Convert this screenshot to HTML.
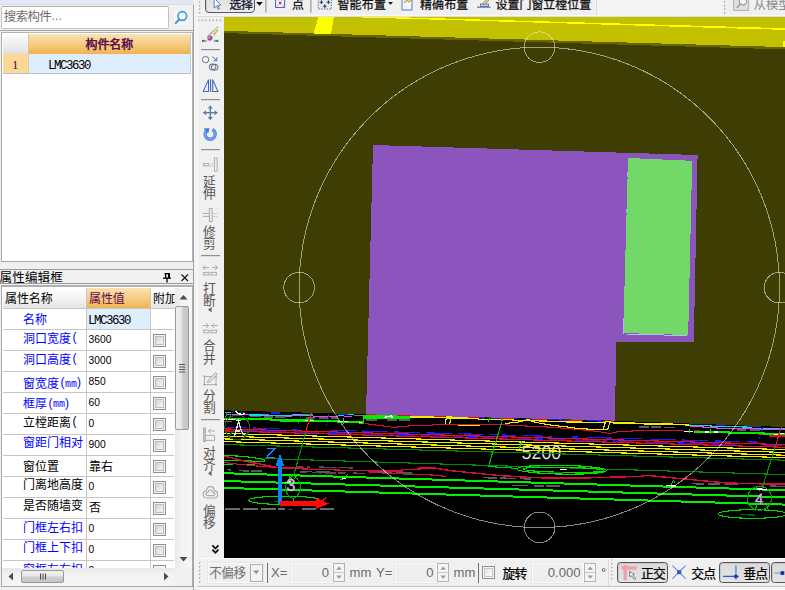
<!DOCTYPE html>
<html lang="zh"><head><meta charset="utf-8"><title>CAD - LMC3630</title><style>
html,body{margin:0;padding:0;background:#f0f0f0;}
body{width:785px;height:590px;overflow:hidden;position:relative;font-family:"Liberation Sans",sans-serif;}
#app{position:absolute;left:0;top:0;width:785px;height:590px;overflow:hidden;background:#f0f0f0;}
#app>div{position:absolute;box-sizing:content-box;}
#app>div.b{box-sizing:border-box;}
.t{white-space:nowrap;line-height:1;}
.mono{font:12.4px "Liberation Mono",monospace;letter-spacing:-1.45px;color:#000;}
.h{color:transparent;font-family:"Liberation Sans",sans-serif;line-height:1;white-space:nowrap;overflow:hidden;}
.num{font:10.3px "Liberation Sans",sans-serif;color:#000;}
#ov{position:absolute;left:0;top:0;pointer-events:none;}
#ov text.c{font-family:"Liberation Sans","Noto Sans CJK SC",sans-serif;}
</style></head>
<body>
<div id="app">
<div style="left:0px;top:0px;width:194px;height:590px;background:#f0f0f0;"></div>
<div style="left:0px;top:0px;width:194px;height:4px;background:#e2e6f6;"></div>
<div style="left:0px;top:4px;width:194px;height:1px;background:#d9dbe2;"></div>
<div style="left:0px;top:5px;width:194px;height:1px;background:#f4f4f4;"></div>
<div style="left:193px;top:5px;width:1px;height:585px;background:#a3a3a3;"></div>
<div style="left:194px;top:0px;width:3px;height:590px;background:#f3f3f3;"></div>
<div class="b" style="left:1px;top:6px;width:168px;height:23px;background:#fff;border:1px solid #c3c3c3;border-top-color:#ababab;border-radius:2px;"></div>
<div style="left:0px;top:30px;width:194px;height:1px;background:#a6a6a6;"></div>
<div class="b" style="left:1px;top:32px;width:192px;height:230px;background:#fff;border:1px solid #b4b4b4;border-left:1.5px solid #a9a9a9;border-bottom-color:#a9a9a9;"></div>
<div style="left:3px;top:34px;width:25px;height:20px;background:linear-gradient(#fdfdfd,#ececec 60%,#e0e0e0);"></div>
<div style="left:28px;top:34px;width:1px;height:20px;background:#d7c9a8;"></div>
<div style="left:29px;top:34px;width:161px;height:20px;background:linear-gradient(#fae3b3,#f6cf88 45%,#f0b450);"></div>
<div style="left:3px;top:54px;width:25px;height:19px;background:#fdd794;"></div>
<div style="left:28px;top:54px;width:1px;height:19px;background:#d9c9a0;"></div>
<div style="left:29px;top:54px;width:161px;height:19px;background:#dfeefd;"></div>
<div style="left:3px;top:73px;width:187px;height:1px;background:#b9c2cc;"></div>
<div style="left:190px;top:34px;width:1px;height:40px;background:#c8c8c8;"></div>
<div class="t" style="left:12px;top:57px;font:13px 'Liberation Serif',serif;color:#5c0a4e;">1</div>
<div class="t mono" style="left:48px;top:58.5px;">LMC3630</div>
<div class="b" style="left:0px;top:269px;width:194px;height:15px;background:#f1f1f1;border:1px solid #9b9b9b;border-left:none;border-radius:0 2px 2px 0;"></div>
<div class="b" style="left:1px;top:285px;width:192px;height:302px;background:#fff;border:1px solid #a9a9a9;border-top:2px solid #b0b0b0;"></div>
<div style="left:3px;top:288px;width:83px;height:20px;background:linear-gradient(#ffffff,#f3f3f3 55%,#e4e4e4);"></div>
<div style="left:86px;top:288px;width:1px;height:20px;background:#c9c9c9;"></div>
<div style="left:87px;top:288px;width:63px;height:20px;background:linear-gradient(#fae3b3,#f6cf88 45%,#f0b450);"></div>
<div style="left:150px;top:288px;width:1px;height:20px;background:#d8c8a8;"></div>
<div style="left:151px;top:288px;width:24px;height:20px;background:linear-gradient(#ffffff,#f3f3f3 55%,#e4e4e4);"></div>
<div style="left:3px;top:308px;width:171px;height:1px;background:#c6c6c6;"></div>
<div style="left:86px;top:309px;width:1px;height:20px;background:#c6c6c6;"></div>
<div style="left:150px;top:309px;width:1px;height:20px;background:#c6c6c6;"></div>
<div style="left:87px;top:309px;width:63px;height:20px;background:#dfeefd;"></div>
<div class="t mono" style="left:88px;top:313.5px;">LMC3630</div>
<div style="left:3px;top:329px;width:171px;height:1px;background:#c6c6c6;"></div>
<div style="left:86px;top:330px;width:1px;height:20px;background:#c6c6c6;"></div>
<div style="left:150px;top:330px;width:1px;height:20px;background:#c6c6c6;"></div>
<div class="t num" style="left:88.5px;top:334.2px;">3600</div>
<div style="left:153px;top:334px;width:13px;height:13px;box-sizing:border-box;border:1px solid #8e8f8f;background:linear-gradient(135deg,#c4c9d2,#e6e9ee 55%,#fdfdfd);box-shadow:inset 0 0 0 1px #f4f4f4, inset 0 0 0 2px #b9bcc2;"></div>
<div style="left:3px;top:350px;width:171px;height:1px;background:#c6c6c6;"></div>
<div style="left:86px;top:351px;width:1px;height:20px;background:#c6c6c6;"></div>
<div style="left:150px;top:351px;width:1px;height:20px;background:#c6c6c6;"></div>
<div class="t num" style="left:88.5px;top:355.2px;">3000</div>
<div style="left:153px;top:355px;width:13px;height:13px;box-sizing:border-box;border:1px solid #8e8f8f;background:linear-gradient(135deg,#c4c9d2,#e6e9ee 55%,#fdfdfd);box-shadow:inset 0 0 0 1px #f4f4f4, inset 0 0 0 2px #b9bcc2;"></div>
<div style="left:3px;top:371px;width:171px;height:1px;background:#c6c6c6;"></div>
<div style="left:86px;top:372px;width:1px;height:20px;background:#c6c6c6;"></div>
<div style="left:150px;top:372px;width:1px;height:20px;background:#c6c6c6;"></div>
<div class="t num" style="left:88.5px;top:376.2px;">850</div>
<div style="left:153px;top:376px;width:13px;height:13px;box-sizing:border-box;border:1px solid #8e8f8f;background:linear-gradient(135deg,#c4c9d2,#e6e9ee 55%,#fdfdfd);box-shadow:inset 0 0 0 1px #f4f4f4, inset 0 0 0 2px #b9bcc2;"></div>
<div style="left:3px;top:392px;width:171px;height:1px;background:#c6c6c6;"></div>
<div style="left:86px;top:393px;width:1px;height:20px;background:#c6c6c6;"></div>
<div style="left:150px;top:393px;width:1px;height:20px;background:#c6c6c6;"></div>
<div class="t num" style="left:88.5px;top:397.2px;">60</div>
<div style="left:153px;top:397px;width:13px;height:13px;box-sizing:border-box;border:1px solid #8e8f8f;background:linear-gradient(135deg,#c4c9d2,#e6e9ee 55%,#fdfdfd);box-shadow:inset 0 0 0 1px #f4f4f4, inset 0 0 0 2px #b9bcc2;"></div>
<div style="left:3px;top:413px;width:171px;height:1px;background:#c6c6c6;"></div>
<div style="left:86px;top:414px;width:1px;height:20px;background:#c6c6c6;"></div>
<div style="left:150px;top:414px;width:1px;height:20px;background:#c6c6c6;"></div>
<div class="t num" style="left:88.5px;top:418.2px;">0</div>
<div style="left:153px;top:418px;width:13px;height:13px;box-sizing:border-box;border:1px solid #8e8f8f;background:linear-gradient(135deg,#c4c9d2,#e6e9ee 55%,#fdfdfd);box-shadow:inset 0 0 0 1px #f4f4f4, inset 0 0 0 2px #b9bcc2;"></div>
<div style="left:3px;top:434px;width:171px;height:1px;background:#c6c6c6;"></div>
<div style="left:86px;top:435px;width:1px;height:20px;background:#c6c6c6;"></div>
<div style="left:150px;top:435px;width:1px;height:20px;background:#c6c6c6;"></div>
<div class="t num" style="left:88.5px;top:439.2px;">900</div>
<div style="left:153px;top:439px;width:13px;height:13px;box-sizing:border-box;border:1px solid #8e8f8f;background:linear-gradient(135deg,#c4c9d2,#e6e9ee 55%,#fdfdfd);box-shadow:inset 0 0 0 1px #f4f4f4, inset 0 0 0 2px #b9bcc2;"></div>
<div style="left:3px;top:455px;width:171px;height:1px;background:#c6c6c6;"></div>
<div style="left:86px;top:456px;width:1px;height:20px;background:#c6c6c6;"></div>
<div style="left:150px;top:456px;width:1px;height:20px;background:#c6c6c6;"></div>
<div style="left:153px;top:460px;width:13px;height:13px;box-sizing:border-box;border:1px solid #8e8f8f;background:linear-gradient(135deg,#c4c9d2,#e6e9ee 55%,#fdfdfd);box-shadow:inset 0 0 0 1px #f4f4f4, inset 0 0 0 2px #b9bcc2;"></div>
<div style="left:3px;top:476px;width:171px;height:1px;background:#c6c6c6;"></div>
<div style="left:86px;top:477px;width:1px;height:20px;background:#c6c6c6;"></div>
<div style="left:150px;top:477px;width:1px;height:20px;background:#c6c6c6;"></div>
<div class="t num" style="left:88.5px;top:481.2px;">0</div>
<div style="left:153px;top:481px;width:13px;height:13px;box-sizing:border-box;border:1px solid #8e8f8f;background:linear-gradient(135deg,#c4c9d2,#e6e9ee 55%,#fdfdfd);box-shadow:inset 0 0 0 1px #f4f4f4, inset 0 0 0 2px #b9bcc2;"></div>
<div style="left:3px;top:497px;width:171px;height:1px;background:#c6c6c6;"></div>
<div style="left:86px;top:498px;width:1px;height:20px;background:#c6c6c6;"></div>
<div style="left:150px;top:498px;width:1px;height:20px;background:#c6c6c6;"></div>
<div style="left:153px;top:502px;width:13px;height:13px;box-sizing:border-box;border:1px solid #8e8f8f;background:linear-gradient(135deg,#c4c9d2,#e6e9ee 55%,#fdfdfd);box-shadow:inset 0 0 0 1px #f4f4f4, inset 0 0 0 2px #b9bcc2;"></div>
<div style="left:3px;top:518px;width:171px;height:1px;background:#c6c6c6;"></div>
<div style="left:86px;top:519px;width:1px;height:20px;background:#c6c6c6;"></div>
<div style="left:150px;top:519px;width:1px;height:20px;background:#c6c6c6;"></div>
<div class="t num" style="left:88.5px;top:523.2px;">0</div>
<div style="left:153px;top:523px;width:13px;height:13px;box-sizing:border-box;border:1px solid #8e8f8f;background:linear-gradient(135deg,#c4c9d2,#e6e9ee 55%,#fdfdfd);box-shadow:inset 0 0 0 1px #f4f4f4, inset 0 0 0 2px #b9bcc2;"></div>
<div style="left:3px;top:539px;width:171px;height:1px;background:#c6c6c6;"></div>
<div style="left:86px;top:540px;width:1px;height:20px;background:#c6c6c6;"></div>
<div style="left:150px;top:540px;width:1px;height:20px;background:#c6c6c6;"></div>
<div class="t num" style="left:88.5px;top:544.2px;">0</div>
<div style="left:153px;top:544px;width:13px;height:13px;box-sizing:border-box;border:1px solid #8e8f8f;background:linear-gradient(135deg,#c4c9d2,#e6e9ee 55%,#fdfdfd);box-shadow:inset 0 0 0 1px #f4f4f4, inset 0 0 0 2px #b9bcc2;"></div>
<div style="left:3px;top:560px;width:171px;height:1px;background:#c6c6c6;"></div>
<div style="left:86px;top:561px;width:1px;height:7px;background:#c6c6c6;"></div>
<div style="left:150px;top:561px;width:1px;height:7px;background:#c6c6c6;"></div>
<div class="t num" style="left:88.5px;top:565.2px;">0</div>
<div style="left:153px;top:565px;width:13px;height:3px;box-sizing:border-box;border:1px solid #8e8f8f;background:linear-gradient(135deg,#c4c9d2,#e6e9ee 55%,#fdfdfd);box-shadow:inset 0 0 0 1px #f4f4f4, inset 0 0 0 2px #b9bcc2;border-bottom:none;"></div>
<div style="left:175px;top:288px;width:17px;height:280px;background:linear-gradient(90deg,#e9e9e9,#f3f3f3 40%,#f6f6f6);"></div>
<div style="left:175.3px;top:306px;width:14px;height:124px;box-sizing:border-box;border:1px solid #989898;border-radius:2px;background:linear-gradient(90deg,#f2f2f2,#e6e6e6 45%,#cfcfcf 55%,#c4c4c4);"></div>
<div style="left:2px;top:568px;width:172px;height:18px;background:linear-gradient(#e9e9e9,#f3f3f3 40%,#f4f4f4);"></div>
<div style="left:174px;top:568px;width:18px;height:18px;background:#f0f0f0;"></div>
<div style="left:21px;top:570px;width:43px;height:13px;box-sizing:border-box;border:1px solid #989898;border-radius:2px;background:linear-gradient(#f2f2f2,#e6e6e6 45%,#cfcfcf 55%,#c4c4c4);"></div>
<svg class="cv" style="position:absolute;left:224px;top:17px" width="561" height="541" viewBox="224 17 561 541" shape-rendering="crispEdges"><rect x="224" y="17" width="561" height="541" fill="#3e3e04"/><polygon points="224,17 785,17 785,49.4 224,33.1" fill="#686600"/><polygon points="224,17 785,17 785,47.1 224,30.8" fill="#c3c000"/><polygon points="318.5,17 333.8,17 331,34.2 313.3,34.2" fill="#ffff00"/><polygon points="345,17 392,17 785,28.2 785,29.9" fill="#ffff00"/><rect x="783" y="41" width="2" height="6" fill="#ffff00"/><polygon points="373,145 697.6,155 693.8,342 616.4,342 614.8,420.6 366,414.4" fill="#8c55be"/><polygon points="628.1,158 692.2,160.8 688.2,335 623.2,333" fill="#72d867"/><line x1="627.4" y1="172" x2="627.2" y2="177" stroke="#9fb7ff" stroke-width="1"/><line x1="626.2" y1="209" x2="626" y2="214" stroke="#9fb7ff" stroke-width="1"/><line x1="623.0" y1="318" x2="623.0" y2="334" stroke="#a9b9ff" stroke-width="1"/><line x1="626" y1="334" x2="687" y2="335.6" stroke="#a9c4f0" stroke-width="1"/><polygon points="224,410.3 366,414.4 614.8,420.8 785,427 785,558 224,558" fill="#000"/><text x="521.6" y="459" font-family="Liberation Sans" font-size="19.2" fill="#dcdcdc" textLength="39.6" lengthAdjust="spacingAndGlyphs" shape-rendering="auto" style="text-rendering:geometricPrecision">5200</text><line x1="225" y1="412.2" x2="231" y2="412.2" stroke="#00e0e8" stroke-width="1.2"/><line x1="231.5" y1="412.2" x2="233.5" y2="412.2" stroke="#1c1cff" stroke-width="1.2"/><line x1="239" y1="412.4" x2="245" y2="412.4" stroke="#1c1cff" stroke-width="1.2"/><line x1="263" y1="412.6" x2="265" y2="412.6" stroke="#1c1cff" stroke-width="1.2"/><line x1="271" y1="412.9" x2="280" y2="412.9" stroke="#1c1cff" stroke-width="1.2"/><line x1="226" y1="414.2" x2="249" y2="414.2" stroke="#f040f0" stroke-width="1.0"/><line x1="249" y1="414.8" x2="269" y2="414.8" stroke="#00e0e8" stroke-width="1.6"/><line x1="262" y1="414.9" x2="269" y2="414.9" stroke="#f040f0" stroke-width="1"/><line x1="269" y1="415.2" x2="292" y2="415.2" stroke="#00e0e8" stroke-width="1.1"/><line x1="279" y1="416" x2="292" y2="416" stroke="#f040f0" stroke-width="1"/><line x1="292" y1="414.6" x2="303" y2="414.6" stroke="#00e0e8" stroke-width="1.1"/><line x1="303" y1="414.6" x2="313" y2="414.6" stroke="#7a7a7a" stroke-width="1"/><line x1="292" y1="415.8" x2="303" y2="415.8" stroke="#f040f0" stroke-width="1"/><line x1="303" y1="415.8" x2="313" y2="415.8" stroke="#00e0e8" stroke-width="1.1"/><line x1="313" y1="416.6" x2="338" y2="416.6" stroke="#f040f0" stroke-width="1.1"/><line x1="338" y1="415.8" x2="344" y2="415.8" stroke="#00e0e8" stroke-width="1.1"/><line x1="339" y1="414.8" x2="348" y2="414.8" stroke="#1c1cff" stroke-width="1.2"/><line x1="348" y1="414.9" x2="354" y2="414.9" stroke="#00e0e8" stroke-width="1"/><line x1="344" y1="416.8" x2="351" y2="416.8" stroke="#f040f0" stroke-width="1"/><line x1="354" y1="415.2" x2="364" y2="415.2" stroke="#7a7a7a" stroke-width="1"/><line x1="350" y1="414.4" x2="354" y2="414.4" stroke="#00e0e8" stroke-width="1.2"/><line x1="350" y1="416.4" x2="352" y2="416.4" stroke="#f040f0" stroke-width="1.2"/><line x1="250.5" y1="416.6" x2="261" y2="416.70000000000005" stroke="#5c5c5c" stroke-width="1.5"/><line x1="264" y1="416.8" x2="273" y2="416.90000000000003" stroke="#5c5c5c" stroke-width="1.5"/><line x1="275.5" y1="417" x2="285" y2="417.1" stroke="#5c5c5c" stroke-width="1.5"/><line x1="306" y1="417.8" x2="315" y2="417.90000000000003" stroke="#5c5c5c" stroke-width="1.5"/><line x1="319" y1="417.9" x2="328" y2="418.0" stroke="#5c5c5c" stroke-width="1.5"/><line x1="331" y1="418" x2="337" y2="418.1" stroke="#5c5c5c" stroke-width="1.5"/><path d="M301 416 L298.4 424.6 M329 414.6 L326.4 425.6" stroke="#1c1cff" stroke-width="1.1" stroke-dasharray="2 1.4" fill="none"/><polyline points="224,419 271,419.2 271,420.2 338.4,421 338.4,421.9 364,422.4" fill="none" stroke="#00ec00" stroke-width="2.4"/><line x1="224" y1="419.6" x2="235" y2="419.6" stroke="#fff" stroke-width="1.3"/><line x1="305.4" y1="420.6" x2="314" y2="420.6" stroke="#fff" stroke-width="1.3"/><line x1="338.4" y1="421.8" x2="348" y2="421.8" stroke="#fff" stroke-width="1.3"/><line x1="358.5" y1="422.4" x2="364" y2="422.4" stroke="#fff" stroke-width="1.3"/><line x1="343.3" y1="418" x2="343.3" y2="424" stroke="#00ec00" stroke-width="1.1"/><line x1="224" y1="421.3" x2="232" y2="421.5" stroke="#d83030" stroke-width="1"/><polyline points="364.2,415.4 363,423.4" fill="none" stroke="#00ec00" stroke-width="1.3"/><rect x="364.2" y="415.2" width="46" height="3.7" fill="#00ec00"/><path d="M384.4 417.2 L389 416.6 L391 415.6 L392.6 417 L391 418" stroke="#fff" stroke-width="1.3" fill="none"/><line x1="366" y1="414.5" x2="375.8" y2="414.5" stroke="#f00c0c" stroke-width="1.1"/><line x1="397" y1="415.6" x2="410.6" y2="415.6" stroke="#f00c0c" stroke-width="1.1"/><line x1="365.6" y1="419.9" x2="376.7" y2="419.9" stroke="#5e5e5e" stroke-width="1.7"/><line x1="387" y1="420.1" x2="397" y2="420.1" stroke="#5e5e5e" stroke-width="1.7"/><line x1="399" y1="420.2" x2="410" y2="420.2" stroke="#5e5e5e" stroke-width="1.7"/><line x1="432" y1="416.7" x2="445" y2="417.03" stroke="#f00c0c" stroke-width="1.1"/><line x1="447" y1="417.08" x2="452" y2="417.21" stroke="#1c1cff" stroke-width="1.1"/><line x1="459" y1="417.39" x2="465" y2="417.54" stroke="#1c1cff" stroke-width="1.1"/><line x1="465" y1="417.54" x2="479" y2="417.9" stroke="#f00c0c" stroke-width="1.1"/><line x1="479" y1="417.9" x2="485.5" y2="418.07" stroke="#1c1cff" stroke-width="1.1"/><line x1="491" y1="418.21" x2="500" y2="418.44" stroke="#1c1cff" stroke-width="1.1"/><line x1="500" y1="418.44" x2="513.6" y2="418.79" stroke="#f00c0c" stroke-width="1.1"/><line x1="513.6" y1="418.79" x2="517" y2="418.88" stroke="#1c1cff" stroke-width="1.1"/><line x1="523.5" y1="419.05" x2="528" y2="419.16" stroke="#1c1cff" stroke-width="1.1"/><line x1="529" y1="419.19" x2="534" y2="419.32" stroke="#1c1cff" stroke-width="1.1"/><line x1="534" y1="419.32" x2="548" y2="419.68" stroke="#f00c0c" stroke-width="1.1"/><line x1="548" y1="419.68" x2="568" y2="420.19" stroke="#1c1cff" stroke-width="1.1"/><line x1="568" y1="420.19" x2="583" y2="420.58" stroke="#f00c0c" stroke-width="1.1"/><line x1="587" y1="420.68" x2="603" y2="421.09" stroke="#1c1cff" stroke-width="1.1"/><line x1="603" y1="421.09" x2="614.4" y2="421.38" stroke="#f00c0c" stroke-width="1.1"/><polyline points="410.2,417 432,417.2 445.4,417.6 452,418.2 478.4,418.3 478.4,419.4 513,419.6 513,420.6 546.6,420.8 546.6,421.7 581,421.8 581,422.6 605,422.6" fill="none" stroke="#f6ee00" stroke-width="1.5"/><polyline points="610.4,422.6 623,422.9 642,423.6 691,424.8" fill="none" stroke="#f6ee00" stroke-width="1.7"/><path d="M446.8 416.4 L451.4 416.6 L449.4 424.7 L445 424.5 Z" stroke="#f6ee00" stroke-width="1.2" fill="none"/><line x1="458" y1="425.4" x2="480" y2="425.4" stroke="#f6ee00" stroke-width="1.1"/><polyline points="489.6,418 488.2,422" fill="none" stroke="#00ec00" stroke-width="1.1"/><line x1="502" y1="419.4" x2="502" y2="421.4" stroke="#00ec00" stroke-width="1.6"/><polyline points="504.7,423.4 515.4,422.5 522,421.4 528.3,419.2 532,421.4 536.4,422.5 541,423.4 547,424.5 554.6,425.6 564,426.5 572,427.6 579,428.6 595,429.4 603.4,429.4" fill="none" stroke="#f6ee00" stroke-width="1.1"/><path d="M605.6 421.6 L610 421.8 L607.7 429.3 L603.2 429.1 Z" stroke="#f6ee00" stroke-width="1.2" fill="none"/><line x1="689" y1="424.2" x2="691" y2="424.2" stroke="#1c1cff" stroke-width="1.4"/><polyline points="690,425.5 711,425.6 711,426.3 751,427.1 751,428.2 785,428.4" fill="none" stroke="#00e0e8" stroke-width="1.2"/><polyline points="690.4,426.7 703,426.7 703,427.4 726,428.4 750,428.5 760.5,429.4 785,429.4" fill="none" stroke="#f040f0" stroke-width="1.1"/><line x1="715" y1="425.6" x2="726" y2="425.6" stroke="#1c1cff" stroke-width="1.3"/><line x1="747" y1="426.5" x2="761" y2="426.5" stroke="#1c1cff" stroke-width="1.3"/><line x1="642" y1="427" x2="649" y2="427" stroke="#5e5e5e" stroke-width="1.6"/><line x1="651.4" y1="427.2" x2="660.6" y2="427.2" stroke="#5e5e5e" stroke-width="1.6"/><line x1="664" y1="427.6" x2="675" y2="427.6" stroke="#5e5e5e" stroke-width="1.6"/><line x1="737.4" y1="429.8" x2="746.4" y2="429.8" stroke="#5e5e5e" stroke-width="1.6"/><line x1="750" y1="430" x2="759.6" y2="430" stroke="#5e5e5e" stroke-width="1.6"/><line x1="638.5" y1="427" x2="642" y2="427" stroke="#5e5e5e" stroke-width="1.4"/><path d="M762.4 427 L759.2 438.8" stroke="#1c1cff" stroke-width="1.1" stroke-dasharray="2 1.4" fill="none"/><polyline points="364.7,423.4 370,424.3 379,425.4 387,426.5 394,427.4 402,426.5 414,425.6 432,425.4 433,424.3 500,424.5 513,425.4 537,426.5 554,427.4 567,428.6 579,429.5 589,430.5 597,431.4 604,432.5 611.3,433.7 612.4,432.3 624,431.4 646,430.3 684,430.3" fill="none" stroke="#d80c3c" stroke-width="1.1"/><line x1="694" y1="430.3" x2="700" y2="430.3" stroke="#d80c3c" stroke-width="1"/><line x1="758.4" y1="434.3" x2="763" y2="434.3" stroke="#d80c3c" stroke-width="1"/><line x1="769.4" y1="436" x2="785" y2="436" stroke="#d80c3c" stroke-width="1.1"/><line x1="684" y1="431.6" x2="693" y2="431.6" stroke="#fff" stroke-width="1.3"/><polyline points="694,432 715,432.1 729,432.2 729,433.1 763.4,433.4 763.4,434.1 785,434.2" fill="none" stroke="#00ec00" stroke-width="2.2"/><line x1="705" y1="432" x2="709" y2="432" stroke="#fff" stroke-width="1.3"/><line x1="714" y1="432" x2="718" y2="432" stroke="#fff" stroke-width="1.3"/><line x1="774" y1="434.4" x2="778" y2="434.4" stroke="#fff" stroke-width="1.3"/><line x1="780.4" y1="433.4" x2="784.4" y2="433.4" stroke="#fff" stroke-width="1.3"/><line x1="689.4" y1="428.5" x2="689.4" y2="432.7" stroke="#00ec00" stroke-width="1.1"/><line x1="710.4" y1="429" x2="710.4" y2="433.6" stroke="#00ec00" stroke-width="1.1"/><line x1="224" y1="428.9" x2="785" y2="444.6" stroke="#f00c0c" stroke-width="1.15"/><line x1="224" y1="430.9" x2="785" y2="447.3" stroke="#f00c0c" stroke-width="1.15"/><line x1="226" y1="427.26" x2="233.6" y2="427.47" stroke="#1c1cff" stroke-width="1.2"/><line x1="235" y1="427.51" x2="247" y2="427.84" stroke="#1c1cff" stroke-width="1.2"/><line x1="253" y1="428.01" x2="279" y2="428.74" stroke="#1c1cff" stroke-width="1.2"/><line x1="292" y1="429.1" x2="297" y2="429.24" stroke="#1c1cff" stroke-width="1.2"/><line x1="330" y1="430.17" x2="337" y2="430.36" stroke="#1c1cff" stroke-width="1.2"/><line x1="337" y1="430.36" x2="356.6" y2="430.91" stroke="#1c1cff" stroke-width="1.2"/><line x1="362" y1="431.06" x2="372" y2="431.34" stroke="#1c1cff" stroke-width="1.2"/><line x1="372" y1="431.34" x2="388" y2="431.79" stroke="#1c1cff" stroke-width="1.2"/><line x1="394" y1="431.96" x2="406" y2="432.29" stroke="#1c1cff" stroke-width="1.2"/><line x1="406" y1="432.29" x2="420" y2="432.69" stroke="#1c1cff" stroke-width="1.2"/><line x1="426" y1="432.85" x2="432" y2="433.02" stroke="#1c1cff" stroke-width="1.2"/><line x1="432" y1="433.02" x2="440" y2="433.24" stroke="#1c1cff" stroke-width="1.2"/><line x1="440" y1="433.24" x2="452" y2="433.58" stroke="#1c1cff" stroke-width="1.2"/><line x1="458" y1="433.75" x2="475" y2="434.22" stroke="#1c1cff" stroke-width="1.2"/><line x1="475" y1="434.22" x2="484" y2="434.48" stroke="#1c1cff" stroke-width="1.2"/><line x1="490" y1="434.64" x2="497" y2="434.84" stroke="#1c1cff" stroke-width="1.2"/><line x1="502" y1="434.98" x2="509" y2="435.18" stroke="#1c1cff" stroke-width="1.2"/><line x1="509" y1="435.18" x2="516" y2="435.37" stroke="#1c1cff" stroke-width="1.2"/><line x1="522" y1="435.54" x2="544" y2="436.16" stroke="#1c1cff" stroke-width="1.2"/><line x1="548" y1="436.27" x2="552" y2="436.38" stroke="#1c1cff" stroke-width="1.2"/><line x1="572" y1="436.94" x2="578" y2="437.11" stroke="#1c1cff" stroke-width="1.2"/><line x1="586" y1="437.33" x2="612" y2="438.06" stroke="#1c1cff" stroke-width="1.2"/><line x1="618" y1="438.23" x2="642" y2="438.9" stroke="#1c1cff" stroke-width="1.2"/><line x1="650" y1="439.12" x2="676" y2="439.85" stroke="#1c1cff" stroke-width="1.2"/><line x1="682" y1="440.02" x2="708" y2="440.75" stroke="#1c1cff" stroke-width="1.2"/><line x1="715" y1="440.94" x2="740" y2="441.64" stroke="#1c1cff" stroke-width="1.2"/><line x1="746" y1="441.81" x2="758" y2="442.14" stroke="#1c1cff" stroke-width="1.2"/><line x1="231" y1="430.1" x2="257" y2="430.85" stroke="#1c1cff" stroke-width="1.2"/><line x1="263" y1="431.02" x2="287" y2="431.71" stroke="#1c1cff" stroke-width="1.2"/><line x1="294" y1="431.91" x2="319" y2="432.63" stroke="#1c1cff" stroke-width="1.2"/><line x1="328" y1="432.88" x2="352" y2="433.57" stroke="#1c1cff" stroke-width="1.2"/><line x1="363" y1="433.89" x2="383" y2="434.46" stroke="#1c1cff" stroke-width="1.2"/><line x1="389" y1="434.64" x2="394" y2="434.78" stroke="#1c1cff" stroke-width="1.2"/><line x1="397" y1="434.86" x2="415" y2="435.38" stroke="#1c1cff" stroke-width="1.2"/><line x1="421" y1="435.55" x2="430" y2="435.81" stroke="#1c1cff" stroke-width="1.2"/><line x1="434" y1="435.93" x2="447" y2="436.3" stroke="#1c1cff" stroke-width="1.2"/><line x1="453" y1="436.47" x2="463" y2="436.76" stroke="#1c1cff" stroke-width="1.2"/><line x1="466" y1="436.85" x2="478" y2="437.19" stroke="#1c1cff" stroke-width="1.2"/><line x1="482" y1="437.3" x2="494" y2="437.65" stroke="#1c1cff" stroke-width="1.2"/><line x1="502" y1="437.88" x2="508" y2="438.05" stroke="#1c1cff" stroke-width="1.2"/><line x1="517" y1="438.31" x2="531" y2="438.71" stroke="#1c1cff" stroke-width="1.2"/><line x1="535" y1="438.83" x2="543" y2="439.05" stroke="#1c1cff" stroke-width="1.2"/><line x1="549" y1="439.23" x2="566" y2="439.71" stroke="#1c1cff" stroke-width="1.2"/><line x1="574.6" y1="439.96" x2="600" y2="440.69" stroke="#1c1cff" stroke-width="1.2"/><line x1="603.4" y1="440.79" x2="607" y2="440.89" stroke="#1c1cff" stroke-width="1.2"/><line x1="613" y1="441.06" x2="634" y2="441.67" stroke="#1c1cff" stroke-width="1.2"/><line x1="645" y1="441.98" x2="669" y2="442.67" stroke="#1c1cff" stroke-width="1.2"/><line x1="677" y1="442.9" x2="703" y2="443.65" stroke="#1c1cff" stroke-width="1.2"/><line x1="709" y1="443.82" x2="735" y2="444.57" stroke="#1c1cff" stroke-width="1.2"/><line x1="763" y1="445.37" x2="782" y2="445.91" stroke="#1c1cff" stroke-width="1.2"/><line x1="224" y1="430.9" x2="785" y2="447.3" stroke="#f00c0c" stroke-width="1.0"/><line x1="224" y1="433.4" x2="785" y2="449.6" stroke="#f6ee00" stroke-width="1.15"/><line x1="224" y1="436.2" x2="785" y2="452.4" stroke="#f6ee00" stroke-width="1.15"/><line x1="224" y1="438.9" x2="785" y2="455.2" stroke="#f6ee00" stroke-width="1.15"/><line x1="224" y1="441.6" x2="785" y2="457.6" stroke="#f6ee00" stroke-width="1.15"/><line x1="224" y1="444.5" x2="785" y2="460.2" stroke="#008800" stroke-width="1.1"/><polyline points="224,455.5 230,455.6 245,456.5 253,457.6 261,458.8 264.6,459.6 264,461.4 261,462" fill="none" stroke="#00d800" stroke-width="1.2"/><polyline points="224,460.5 242.5,460.6 247,460.5 250.6,460.6 252.4,461.4 261.2,461.5" fill="none" stroke="#00d800" stroke-width="1.2"/><polyline points="224,464.3 232.7,464.3" fill="none" stroke="#00d800" stroke-width="1.2"/><polyline points="242,464.3 253.7,464.3 256.8,463.4" fill="none" stroke="#00d800" stroke-width="1.2"/><line x1="265" y1="458.56" x2="785" y2="474.6" stroke="#008a00" stroke-width="1.1"/><polyline points="224,462.5 233,463.6 242,464.6 252,465.6 263,466.5 275,467.4 285,468.2" fill="none" stroke="#d80c3c" stroke-width="1.1"/><polyline points="224,456.3 231,457.6 237,459.4 242,460.5 247,461.6 252,462.5 257,463.4 262,464.5 267,465.4 272,466.5 277,467.4 283,468 303,468 303,469.2 335,469.4 335,470.2 369,470.4 369,471 402,471 402,469.4 420,469.2 420,468 436,468.2 450,470.6 500,475.6 530,477.4 553,478.2 590,477.8 640,476.4 647,475.4 680,478.6 727,483 760,483.8 785,484" fill="none" stroke="#d80c3c" stroke-width="1.45"/><polyline points="368.7,472.4 400,473.6 432,475 446,476.4" fill="none" stroke="#d80c3c" stroke-width="1.2"/><line x1="227" y1="469.6" x2="231.4" y2="469.90000000000003" stroke="#5a5a5a" stroke-width="1.6"/><line x1="239" y1="470.6" x2="249" y2="470.90000000000003" stroke="#5a5a5a" stroke-width="1.6"/><line x1="251" y1="470.9" x2="261.7" y2="471.2" stroke="#5a5a5a" stroke-width="1.6"/><line x1="300" y1="471.4" x2="312" y2="471.7" stroke="#5a5a5a" stroke-width="1.6"/><line x1="316" y1="472" x2="330" y2="472.3" stroke="#5a5a5a" stroke-width="1.6"/><line x1="378" y1="472.2" x2="392" y2="472.5" stroke="#5a5a5a" stroke-width="1.6"/><line x1="396" y1="472.6" x2="412" y2="472.90000000000003" stroke="#5a5a5a" stroke-width="1.6"/><line x1="483" y1="477.6" x2="497" y2="477.90000000000003" stroke="#5a5a5a" stroke-width="1.6"/><line x1="500" y1="478.2" x2="516" y2="478.5" stroke="#5a5a5a" stroke-width="1.6"/><line x1="520" y1="478.6" x2="531" y2="478.90000000000003" stroke="#5a5a5a" stroke-width="1.6"/><line x1="546" y1="486" x2="560" y2="486.3" stroke="#5a5a5a" stroke-width="1.6"/><line x1="512" y1="485.4" x2="528" y2="485.7" stroke="#5a5a5a" stroke-width="1.6"/><line x1="534" y1="485.8" x2="544" y2="486.1" stroke="#5a5a5a" stroke-width="1.6"/><line x1="692" y1="483.6" x2="704" y2="483.90000000000003" stroke="#5a5a5a" stroke-width="1.6"/><line x1="708" y1="484" x2="720" y2="484.3" stroke="#5a5a5a" stroke-width="1.6"/><line x1="724" y1="484.4" x2="738" y2="484.7" stroke="#5a5a5a" stroke-width="1.6"/><line x1="770" y1="486.2" x2="785" y2="486.5" stroke="#5a5a5a" stroke-width="1.6"/><line x1="295.6" y1="466.6" x2="302.7" y2="466.8" stroke="#4e4e4e" stroke-width="1.5"/><line x1="307" y1="466.8" x2="310" y2="467.0" stroke="#4e4e4e" stroke-width="1.5"/><line x1="318.8" y1="467.2" x2="336.6" y2="467.4" stroke="#4e4e4e" stroke-width="1.5"/><line x1="338" y1="467.6" x2="352.6" y2="467.8" stroke="#4e4e4e" stroke-width="1.5"/><line x1="300" y1="472.4" x2="307" y2="472.59999999999997" stroke="#4e4e4e" stroke-width="1.5"/><line x1="312.5" y1="472.6" x2="321.4" y2="472.8" stroke="#4e4e4e" stroke-width="1.5"/><line x1="325" y1="472.8" x2="335.7" y2="473.0" stroke="#4e4e4e" stroke-width="1.5"/><line x1="338.4" y1="473" x2="345.5" y2="473.2" stroke="#4e4e4e" stroke-width="1.5"/><line x1="353.5" y1="473.2" x2="365" y2="473.4" stroke="#4e4e4e" stroke-width="1.5"/><line x1="402.6" y1="473.8" x2="413.3" y2="474.0" stroke="#4e4e4e" stroke-width="1.5"/><line x1="224" y1="473.2" x2="785" y2="490.2" stroke="#00f000" stroke-width="2.0"/><line x1="224" y1="481.0" x2="785" y2="497.2" stroke="#00f000" stroke-width="2.0"/><line x1="224" y1="487.9" x2="785" y2="504.6" stroke="#00f000" stroke-width="2.0"/><polyline points="501.6,422.5 493.6,448.8 488.6,466.6 500,467.2 516.8,468.4" fill="none" stroke="#00c400" stroke-width="1.1"/><line x1="521.6" y1="441.3" x2="519.4" y2="448.8" stroke="#00d800" stroke-width="1.1"/><line x1="225.4" y1="420" x2="226.6" y2="412.4" stroke="#00b000" stroke-width="1"/><ellipse cx="561.5" cy="469.7" rx="44.8" ry="4.4" transform="rotate(1.1 561.5 469.7)" fill="none" stroke="#00e000" stroke-width="1.2"/><ellipse cx="563.4" cy="469.8" rx="40.4" ry="2.5" transform="rotate(1.1 563.4 469.8)" fill="none" stroke="#00e000" stroke-width="1.1"/><line x1="559.5" y1="469.6" x2="567" y2="469.6" stroke="#fff" stroke-width="1.3"/><line x1="548" y1="472.4" x2="563" y2="472.6" stroke="#444" stroke-width="1.2"/><circle cx="237.2" cy="427.4" r="12.3" fill="none" stroke="#087408" stroke-width="1"/><path d="M227 420 L232 414 M229 436 L234 430 M243 438 L248 432 M246 421 L249 417" stroke="#087408" stroke-width="1" fill="none"/><path d="M235.5 411.5 Q240 416 245 413.5" stroke="#fff" stroke-width="1.3" fill="none"/><path d="M234.4 436 L238.6 421.4 L242.8 436 M236 431 L241.4 431 M236.4 420.4 L241 420.4" stroke="#e0e0e0" stroke-width="1.4" fill="none"/><path d="M240 430 L243.4 436.4" stroke="#5050c0" stroke-width="1" fill="none"/><ellipse cx="284.4" cy="500.3" rx="35.6" ry="4.2" fill="none" stroke="#00d800" stroke-width="1.1"/><line x1="274" y1="501.4" x2="279" y2="501.4" stroke="#006000" stroke-width="1.6"/><polyline points="311.2,413 305.8,431.8" fill="none" stroke="#ff1010" stroke-width="1.1"/><polyline points="305.8,431.8 293.4,476.4" fill="none" stroke="#009800" stroke-width="1.1"/><path d="M293.3 475.6 Q302.6 482 300.6 490 Q298.4 496 293.3 498.6 Q285 495 285.6 487 Q286 481 293.3 475.6 Z" fill="none" stroke="#00a800" stroke-width="1"/><line x1="293.3" y1="498.6" x2="293.3" y2="504" stroke="#00d800" stroke-width="1"/><path d="M289 476.5 L293 480 M296.6 476 L294 479" stroke="#00d800" stroke-width="1" fill="none"/><text x="286.2" y="490.8" font-family="Liberation Sans" font-size="16.5" fill="#cfc0d2" stroke="#cfc0d2" stroke-width="0.3">3</text><line x1="285.4" y1="482.4" x2="291" y2="481.8" stroke="#fff" stroke-width="1.1"/><line x1="225" y1="508.6" x2="240" y2="509" stroke="#6a6a6a" stroke-width="2"/><line x1="243" y1="508.6" x2="258" y2="509" stroke="#6a6a6a" stroke-width="2"/><line x1="261" y1="508.6" x2="276" y2="509" stroke="#6a6a6a" stroke-width="2"/><line x1="278" y1="508.6" x2="285" y2="509" stroke="#6a6a6a" stroke-width="2"/><line x1="302" y1="508.6" x2="316" y2="509" stroke="#6a6a6a" stroke-width="2"/><line x1="320" y1="508.6" x2="334" y2="509" stroke="#6a6a6a" stroke-width="2"/><line x1="289" y1="509.6" x2="292" y2="509.6" stroke="#555" stroke-width="1.2"/><rect x="277.7" y="465" width="3.8" height="38.6" fill="#0a84ff"/><polygon points="279.9,453.6 284.3,466.2 275.5,466.2" fill="#0a84ff"/><path d="M266.6 448.4 L275.2 448.4 L266.6 457.4 L275.4 457.4" stroke="#1e8cff" stroke-width="1.3" fill="none"/><rect x="280" y="501.3" width="38" height="4.2" fill="#ff0a0a"/><polygon points="316.4,498.2 329.2,503.8 316.4,508.6" fill="#ff0a0a"/><path d="M317.6 497.6 L325.4 505 M326 497.6 L318 505.4" stroke="#ff0a0a" stroke-width="1.1" fill="none"/><path d="M345.6 478.4 L347.6 473.6 M340 479.6 L345.6 478.4" stroke="#00d800" stroke-width="1" fill="none"/><line x1="342" y1="478.6" x2="346" y2="478.2" stroke="#fff" stroke-width="1.1"/><path d="M671 484.6 L673.4 480.2 M673.4 480.2 L675 483" stroke="#00d800" stroke-width="1" fill="none"/><line x1="666" y1="485.8" x2="676" y2="486" stroke="#fff" stroke-width="1.2"/><ellipse cx="752.8" cy="514" rx="34.4" ry="4.3" fill="none" stroke="#00d800" stroke-width="1.1"/><line x1="740" y1="514.6" x2="754.6" y2="514.8" stroke="#006400" stroke-width="1.6"/><polyline points="781.3,427 775.8,444.7" fill="none" stroke="#ff1010" stroke-width="1.1"/><polyline points="775.8,444.7 769.5,465 761.9,489" fill="none" stroke="#009800" stroke-width="1.1"/><circle cx="759.5" cy="498.2" r="12" fill="none" stroke="#00a000" stroke-width="1"/><path d="M756 487.4 L760 490.6 M764 487 L761.6 490 M756.6 504 L755.4 511.4 M766 503.6 L768.4 509.6" stroke="#00c800" stroke-width="1" fill="none"/><line x1="757" y1="489" x2="767" y2="489.2" stroke="#fff" stroke-width="1.2"/><text x="755" y="503.6" font-family="Liberation Sans" font-size="15" fill="#c4c4c4" stroke="#c4c4c4" stroke-width="0.4">4</text><line x1="761.4" y1="492.6" x2="761.4" y2="504.6" stroke="#e050e0" stroke-width="1.1"/><g shape-rendering="crispEdges" fill="none" stroke="rgba(240,240,228,0.56)" stroke-width="1"><circle cx="539.3" cy="287.4" r="240.2"/><circle cx="539.5" cy="47.2" r="15.3"/><circle cx="299.1" cy="287.6" r="15.3"/><circle cx="779.5" cy="287.6" r="15.3"/><circle cx="539.6" cy="527.4" r="15.3"/></g></svg>
<div style="left:197px;top:16px;width:27px;height:542px;background:#f0f0f0;"></div>
<div style="left:197px;top:16px;width:1px;height:542px;background:#fbfbfb;"></div>
<div style="left:197px;top:0px;width:400px;height:16px;background:#f0f0f0;"></div>
<div style="left:597px;top:0px;width:125px;height:16px;background:#f4f4f4;"></div>
<div style="left:596px;top:0px;width:1px;height:15px;background:#dcdcdc;"></div>
<div style="left:722px;top:0px;width:63px;height:16px;background:#f0f0f0;"></div>
<div style="left:197px;top:15px;width:588px;height:1px;background:#f8f8f8;"></div>
<div style="left:197px;top:16px;width:588px;height:1px;background:#dedede;"></div>
<div style="left:205px;top:-6px;width:50px;height:19px;box-sizing:border-box;border:1px solid #5a5a5a;border-radius:4px;background:linear-gradient(#dedede,#ececec);box-shadow:inset 1px 0 0 #cfcfcf;"></div>
<div style="left:197px;top:558px;width:588px;height:32px;background:#f0f0f0;"></div>
<div style="left:197px;top:558px;width:588px;height:1px;background:#fdfdfd;"></div>
<div style="left:197px;top:586px;width:588px;height:1px;background:#c4c4c4;"></div>
<div style="left:197px;top:587px;width:588px;height:3px;background:#f6f6f6;"></div>
<div style="left:608px;top:559px;width:1px;height:27px;background:#dcdcdc;"></div>
<div style="left:208px;top:563px;width:55px;height:20px;box-sizing:border-box;border:1px solid #fbfbfb;background:#efefef;box-shadow:0 0 0 1px #e6e6e6;"></div>
<div style="left:250px;top:564px;width:13px;height:18px;box-sizing:border-box;border:1px solid #ababab;background:#f3f3f3;"></div>
<div style="left:267px;top:563px;width:1px;height:20px;background:#6e6e6e;"></div>
<div class="t" style="left:271px;top:565.4px;font:13.1px 'Liberation Sans',sans-serif;color:#6b6b6b;">X=</div>
<div style="left:291.4px;top:563px;width:41.2px;height:20px;box-sizing:border-box;border:1px solid #fbfbfb;background:#efefef;box-shadow:0 0 0 1px #e6e6e6;"></div>
<div class="t" style="left:292px;top:565.4px;width:37px;text-align:right;font:13.1px 'Liberation Sans',sans-serif;color:#6b6b6b;">0</div>
<div style="left:333px;top:563px;width:12px;height:19px;box-sizing:border-box;border:1px solid #b4b4b4;background:#f4f4f4;"></div>
<div style="left:334px;top:572px;width:10px;height:1px;background:#c8c8c8;"></div>
<div class="t" style="left:349.5px;top:565.4px;font:13.1px 'Liberation Sans',sans-serif;color:#6b6b6b;">mm</div>
<div class="t" style="left:376px;top:565.4px;font:13.1px 'Liberation Sans',sans-serif;color:#6b6b6b;">Y=</div>
<div style="left:394.6px;top:563px;width:42.2px;height:20px;box-sizing:border-box;border:1px solid #fbfbfb;background:#efefef;box-shadow:0 0 0 1px #e6e6e6;"></div>
<div class="t" style="left:395px;top:565.4px;width:38.5px;text-align:right;font:13.1px 'Liberation Sans',sans-serif;color:#6b6b6b;">0</div>
<div style="left:437.2px;top:563px;width:12px;height:19px;box-sizing:border-box;border:1px solid #b4b4b4;background:#f4f4f4;"></div>
<div style="left:438.2px;top:572px;width:10px;height:1px;background:#c8c8c8;"></div>
<div class="t" style="left:453.5px;top:565.4px;font:13.1px 'Liberation Sans',sans-serif;color:#6b6b6b;">mm</div>
<div style="left:478px;top:563px;width:1px;height:20px;background:#6e6e6e;"></div>
<div style="left:482px;top:566px;width:13px;height:13px;box-sizing:border-box;border:1px solid #8e8f8f;background:linear-gradient(135deg,#dcdcdc,#f4f4f4 60%,#fff);box-shadow:inset 0 0 0 1px #f4f4f4, inset 0 0 0 2px #c8c8c8;"></div>
<div style="left:531.8px;top:563px;width:52px;height:20px;box-sizing:border-box;border:1px solid #fbfbfb;background:#efefef;box-shadow:0 0 0 1px #e6e6e6;"></div>
<div class="t" style="left:532px;top:565.4px;width:48.5px;text-align:right;font:13.1px 'Liberation Sans',sans-serif;color:#6b6b6b;">0.000</div>
<div style="left:584.2px;top:563px;width:12px;height:19px;box-sizing:border-box;border:1px solid #b4b4b4;background:#f4f4f4;"></div>
<div style="left:585.2px;top:572px;width:10px;height:1px;background:#c8c8c8;"></div>
<div style="left:617.3px;top:562px;width:50.6px;height:21px;box-sizing:border-box;border:1px solid #555;border-radius:3.5px;background:linear-gradient(#dadada,#e4e4e4);box-shadow:inset 1px 1px 0 #c8c8c8;"></div>
<div style="left:719.2px;top:562px;width:50.6px;height:21px;box-sizing:border-box;border:1px solid #555;border-radius:3.5px;background:linear-gradient(#dadada,#e4e4e4);box-shadow:inset 1px 1px 0 #c8c8c8;"></div>
<div style="left:770.6px;top:562px;width:30px;height:21px;box-sizing:border-box;border:1px solid #555;border-radius:3.5px;background:linear-gradient(#dadada,#e4e4e4);box-shadow:inset 1px 1px 0 #c8c8c8;"></div>
<div class="h" style="left:4px;top:10px;width:50px;height:13px;font-size:12px;">搜索构件</div>
<div class="h" style="left:86px;top:38px;width:48px;height:13px;font-size:12px;">构件名称</div>
<div class="h" style="left:0px;top:270px;width:62px;height:14px;font-size:12px;">属性编辑框</div>
<div class="h" style="left:5px;top:292px;width:48px;height:13px;font-size:12px;">属性名称</div>
<div class="h" style="left:89px;top:292px;width:36px;height:13px;font-size:12px;">属性值</div>
<div class="h" style="left:153px;top:292px;width:24px;height:13px;font-size:12px;">附加</div>
<div class="h" style="left:23px;top:313px;width:24px;height:13px;font-size:12px;">名称</div>
<div class="h" style="left:23px;top:332px;width:60px;height:13px;font-size:12px;">洞口宽度(</div>
<div class="h" style="left:23px;top:352px;width:60px;height:13px;font-size:12px;">洞口高度(</div>
<div class="h" style="left:23px;top:377px;width:84px;height:13px;font-size:12px;">窗宽度(mm)</div>
<div class="h" style="left:23px;top:397px;width:72px;height:13px;font-size:12px;">框厚(mm)</div>
<div class="h" style="left:23px;top:416px;width:60px;height:13px;font-size:12px;">立樘距离(</div>
<div class="h" style="left:23px;top:436px;width:60px;height:13px;font-size:12px;">窗距门相对</div>
<div class="h" style="left:23px;top:460px;width:36px;height:13px;font-size:12px;">窗位置</div>
<div class="h" style="left:89px;top:460px;width:24px;height:13px;font-size:12px;">靠右</div>
<div class="h" style="left:23px;top:478px;width:60px;height:13px;font-size:12px;">门离地高度</div>
<div class="h" style="left:23px;top:499px;width:60px;height:13px;font-size:12px;">是否随墙变</div>
<div class="h" style="left:89px;top:501px;width:12px;height:13px;font-size:12px;">否</div>
<div class="h" style="left:23px;top:520px;width:60px;height:13px;font-size:12px;">门框左右扣</div>
<div class="h" style="left:23px;top:541px;width:60px;height:13px;font-size:12px;">门框上下扣</div>
<div class="h" style="left:23px;top:563px;width:60px;height:13px;font-size:12px;">窗框左右扣</div>
<div class="h" style="left:203px;top:174px;width:13px;height:25px;font-size:13px;white-space:normal;word-break:break-all;">延伸</div>
<div class="h" style="left:203px;top:223px;width:13px;height:25px;font-size:13px;white-space:normal;word-break:break-all;">修剪</div>
<div class="h" style="left:203px;top:281px;width:13px;height:25px;font-size:13px;white-space:normal;word-break:break-all;">打断</div>
<div class="h" style="left:203px;top:338px;width:13px;height:25px;font-size:13px;white-space:normal;word-break:break-all;">合并</div>
<div class="h" style="left:203px;top:388px;width:13px;height:25px;font-size:13px;white-space:normal;word-break:break-all;">分割</div>
<div class="h" style="left:203px;top:444px;width:13px;height:25px;font-size:13px;white-space:normal;word-break:break-all;">对齐</div>
<div class="h" style="left:203px;top:502px;width:13px;height:25px;font-size:13px;white-space:normal;word-break:break-all;">偏移</div>
<div class="h" style="left:229px;top:-2px;width:24px;height:13px;font-size:12px;">选择</div>
<div class="h" style="left:292px;top:-2px;width:12px;height:13px;font-size:12px;">点</div>
<div class="h" style="left:337px;top:-2px;width:48px;height:13px;font-size:12px;">智能布置</div>
<div class="h" style="left:420px;top:-2px;width:48px;height:13px;font-size:12px;">精确布置</div>
<div class="h" style="left:496px;top:-2px;width:96px;height:13px;font-size:12px;">设置门窗立樘位置</div>
<div class="h" style="left:754px;top:-3px;width:37px;height:13px;font-size:12px;">从模型</div>
<div class="h" style="left:209px;top:566px;width:38px;height:14px;font-size:13px;">不偏移</div>
<div class="h" style="left:502px;top:566px;width:26px;height:14px;font-size:13px;">旋转</div>
<div class="h" style="left:641px;top:566px;width:26px;height:14px;font-size:13px;">正交</div>
<div class="h" style="left:691px;top:566px;width:26px;height:14px;font-size:13px;">交点</div>
<div class="h" style="left:743px;top:566px;width:26px;height:14px;font-size:13px;">垂点</div>
<svg id="ov" width="785" height="590" viewBox="0 0 785 590">
<text class="c" x="3.8" y="21.2" font-size="12.4" fill="#6c6c6c" textLength="47.9" lengthAdjust="spacing">搜索构件</text>
<g fill="#8c8cb4"><rect x="52.4" y="18.6" width="1.5" height="1.5"/><rect x="56" y="18.6" width="1.5" height="1.5"/><rect x="59.6" y="18.6" width="1.5" height="1.5"/></g>
<rect x="174" y="11" width="14" height="14" fill="#f6f6f6"/>
<circle cx="182.3" cy="16" r="4.3" fill="#fdfdfd" stroke="#4399e2" stroke-width="1.7"/><path d="M179.2 19.6 L175.8 23" stroke="#4399e2" stroke-width="2.1" stroke-linecap="round"/>
<text class="c" x="85.5" y="49" font-size="12" fill="#5c0a4e" stroke="#5c0a4e" stroke-width="0.5" textLength="47.7" lengthAdjust="spacing">构件名称</text>
<text class="c" x="-0.5" y="281.5" font-size="12.5" fill="#000" textLength="63.3" lengthAdjust="spacing">属性编辑框</text>
<g fill="#000"><rect x="164.5" y="273" width="5" height="1.3"/><rect x="165" y="273" width="1.3" height="5"/><rect x="168" y="273" width="2" height="5"/><rect x="163" y="277.5" width="8" height="1.3"/><rect x="166.4" y="278" width="1.3" height="4.5"/></g>
<path d="M181.5 274.5 L188 281 M188 274.5 L181.5 281" stroke="#111" stroke-width="1.1" fill="none"/>
<text class="c" x="5" y="303" font-size="12" fill="#000" textLength="47.7" lengthAdjust="spacing">属性名称</text>
<text class="c" x="89" y="303" font-size="12" fill="#5c0a4e" textLength="35.8" lengthAdjust="spacing">属性值</text>
<svg x="151" y="288" width="23.5" height="20" viewBox="151 288 23.5 20"><text class="c" x="153" y="303" font-size="12" fill="#000" textLength="23.9" lengthAdjust="spacing">附加</text></svg>
<svg x="3" y="308" width="172" height="260" viewBox="3 308 172 260"><text class="c" x="23" y="324" font-size="12" fill="#00f">名称</text><text class="c" x="23" y="342.5" font-size="12" fill="#00f">洞口宽度</text><text class="c" x="72.5" y="341" font-size="12" fill="#00f">(</text><text class="c" x="23" y="363.5" font-size="12" fill="#00f">洞口高度</text><text class="c" x="72.5" y="362" font-size="12" fill="#00f">(</text><text class="c" x="23" y="387.6" font-size="12" fill="#00f">窗宽度</text><text class="c" x="60.5" y="386.1" font-size="12" fill="#00f">(</text><text x="65" y="386.6" font-family="Liberation Mono" font-size="10" fill="#00f" textLength="6" lengthAdjust="spacingAndGlyphs">m</text><text x="71" y="386.6" font-family="Liberation Mono" font-size="10" fill="#00f" textLength="6" lengthAdjust="spacingAndGlyphs">m</text><text class="c" x="77" y="386.1" font-size="12" fill="#00f">)</text><text class="c" x="23" y="408" font-size="12" fill="#00f">框厚</text><text class="c" x="48.5" y="406.5" font-size="12" fill="#00f">(</text><text x="53" y="407.0" font-family="Liberation Mono" font-size="10" fill="#00f" textLength="6" lengthAdjust="spacingAndGlyphs">m</text><text x="59" y="407.0" font-family="Liberation Mono" font-size="10" fill="#00f" textLength="6" lengthAdjust="spacingAndGlyphs">m</text><text class="c" x="65" y="406.5" font-size="12" fill="#00f">)</text><text class="c" x="23" y="426.5" font-size="12" fill="#000">立樘距离</text><text class="c" x="72.5" y="425" font-size="12" fill="#000">(</text><text class="c" x="23" y="447.4" font-size="12" fill="#00f">窗距门相对</text><text class="c" x="23" y="471.2" font-size="12" fill="#000">窗位置</text><text class="c" x="89" y="471" font-size="12" fill="#000">靠右</text><text class="c" x="23" y="489.4" font-size="12" fill="#000">门离地高度</text><text class="c" x="23" y="510.1" font-size="12" fill="#000">是否随墙变</text><text class="c" x="89" y="512" font-size="12" fill="#000">否</text><text class="c" x="23" y="531.5" font-size="12" fill="#00f">门框左右扣</text><text class="c" x="23" y="552.4" font-size="12" fill="#00f">门框上下扣</text><text class="c" x="23" y="573.8" font-size="12" fill="#00f">窗框左右扣</text></svg>
<path d="M179.5 299.5 L183.5 295 L187.5 299.5 Z" fill="#4d4d4d"/>
<path d="M179.5 557 L187.5 557 L183.5 561.5 Z" fill="#4d4d4d"/>
<g fill="#555"><rect x="179" y="364" width="6" height="1"/><rect x="179" y="366.5" width="6" height="1"/><rect x="179" y="369" width="6" height="1"/><rect x="179" y="371.5" width="6" height="1"/></g>
<path d="M13 572.5 L13 580.5 L8.5 576.5 Z" fill="#4d4d4d"/>
<path d="M164 572.5 L164 580.5 L168.5 576.5 Z" fill="#4d4d4d"/>
<g fill="#444"><rect x="40" y="573.5" width="1" height="6"/><rect x="42.5" y="573.5" width="1" height="6"/><rect x="45" y="573.5" width="1" height="6"/></g>
<rect x="198.2" y="19.6" width="1.6" height="1.6" fill="#a8a8a8"/><rect x="199.1" y="20.4" width="1" height="1" fill="#fff"/><rect x="201.8" y="19.6" width="1.6" height="1.6" fill="#a8a8a8"/><rect x="202.7" y="20.4" width="1" height="1" fill="#fff"/><rect x="205.4" y="19.6" width="1.6" height="1.6" fill="#a8a8a8"/><rect x="206.3" y="20.4" width="1" height="1" fill="#fff"/><rect x="209.0" y="19.6" width="1.6" height="1.6" fill="#a8a8a8"/><rect x="209.9" y="20.4" width="1" height="1" fill="#fff"/><rect x="212.6" y="19.6" width="1.6" height="1.6" fill="#a8a8a8"/><rect x="213.5" y="20.4" width="1" height="1" fill="#fff"/><rect x="216.2" y="19.6" width="1.6" height="1.6" fill="#a8a8a8"/><rect x="217.1" y="20.4" width="1" height="1" fill="#fff"/><rect x="219.8" y="19.6" width="1.6" height="1.6" fill="#a8a8a8"/><rect x="220.7" y="20.4" width="1" height="1" fill="#fff"/>
<g><defs><linearGradient id="bl" x1="0" x2="1"><stop offset="0" stop-color="#1f4678"/><stop offset="1" stop-color="#1f4678" stop-opacity="0.08"/></linearGradient><linearGradient id="br" x1="0" x2="1"><stop offset="0" stop-color="#1f4678" stop-opacity="0.08"/><stop offset="1" stop-color="#1f4678"/></linearGradient></defs><rect x="202" y="39.9" width="5.6" height="2" fill="url(#bl)"/><rect x="212.8" y="39.9" width="5.4" height="2" fill="url(#br)"/><path d="M213.2 33.9 L217.5 28.7 L218.4 30.2 L214.7 35.6 Z" fill="#e4b830"/><path d="M207.6 36 L217.7 27.1" stroke="#28507c" stroke-width="0.9" stroke-dasharray="1 0.55" fill="none"/><path d="M210.7 35 L212.6 33.3 L214.3 35.4 L212.4 37.1 Z" fill="#fff" stroke="#8a98b4" stroke-width="0.5"/><circle cx="209.9" cy="38.1" r="2.35" fill="#d03c98" stroke="#3c5c8c" stroke-width="0.5"/><circle cx="209.3" cy="37.4" r="0.9" fill="#f2b0d6"/></g>
<rect x="201" y="49" width="19" height="1.2" fill="#8f8f8f"/>
<g fill="none" stroke="#5e6c84" stroke-width="0.95"><circle cx="205.6" cy="59.6" r="3.15" fill="#eef3fc"/><ellipse cx="212.6" cy="66.9" rx="3.3" ry="2.9" transform="rotate(-12 212.6 66.9)" fill="#f4f4f4"/><ellipse cx="214.7" cy="67.3" rx="3.3" ry="2.9" transform="rotate(-12 214.7 67.3)"/></g><path d="M212.2 56.4 L216.4 60.2 M216.9 57.4 L216.9 60.7 L213.6 60.7" stroke="#4573cf" stroke-width="1" fill="none"/>
<g fill="#eef1f9" stroke="#3f66b8" stroke-width="1.05"><path d="M203.3 91.4 L208.5 79.6 L208.5 91.4 Z"/><path d="M212.7 79.6 L217.9 91.4 L212.7 91.4 Z"/></g><rect x="210.05" y="79.2" width="1.1" height="12.8" fill="#3f66b8"/>
<rect x="201" y="99" width="19" height="1.2" fill="#8f8f8f"/>
<g fill="#5a7da6" stroke="none"><rect x="209.6" y="107.2" width="1.4" height="11"/><rect x="204.6" y="112" width="11.4" height="1.4"/><path d="M210.3 105.2 L212.8 108.4 L207.8 108.4 Z"/><path d="M210.3 120.2 L212.8 117 L207.8 117 Z"/><path d="M202.8 112.7 L206 110.2 L206 115.2 Z"/><path d="M217.8 112.7 L214.6 110.2 L214.6 115.2 Z"/></g>
<path d="M207.6 129.8 A5.1 5.1 0 1 0 212.4 129.6" fill="none" stroke="#5788e6" stroke-width="3.4"/><path d="M207.6 129.8 A5.1 5.1 0 1 0 212.4 129.6" fill="none" stroke="#86b0f6" stroke-width="1.2" opacity="0.7"/><path d="M203.6 128.4 L209.4 128.2 L208.2 133.6 Z" fill="#3e78e0"/>
<rect x="201" y="149" width="19" height="1.2" fill="#8f8f8f"/>
<g fill="none" stroke="#ababab" stroke-width="1"><rect x="214.4" y="158" width="2.8" height="13"/><rect x="203.4" y="163.6" width="5" height="2.2"/></g><g fill="#ababab"><rect x="209.6" y="163.4" width="1" height="1"/><rect x="211.6" y="163.4" width="1" height="1"/><rect x="209.6" y="165.6" width="1" height="1"/><rect x="211.6" y="165.6" width="1" height="1"/></g>
<text class="c" x="202.9" y="186.4" font-size="12.7" fill="#5a5550">延</text><text class="c" x="202.9" y="198.4" font-size="12.7" fill="#5a5550">伸</text>
<g fill="none" stroke="#ababab" stroke-width="1"><rect x="209.4" y="208.6" width="2.8" height="13"/><path d="M203 213.4 L209 213.4 M203 216.4 L209 216.4"/></g><g fill="#ababab"><rect x="213.6" y="213" width="1" height="1"/><rect x="215.6" y="213" width="1" height="1"/><rect x="213.6" y="216" width="1" height="1"/><rect x="215.6" y="216" width="1" height="1"/></g>
<text class="c" x="202.9" y="236" font-size="12.7" fill="#5a5550">修</text><text class="c" x="202.9" y="248" font-size="12.7" fill="#5a5550">剪</text>
<rect x="201" y="255" width="19" height="1.2" fill="#8f8f8f"/>
<g fill="none" stroke="#ababab" stroke-width="1"><path d="M203 267.6 L209 267.6 M205.4 265.2 L203 267.6 L205.4 270"/><path d="M217.6 267.6 L211.6 267.6 M215.2 265.2 L217.6 267.6 L215.2 270"/><rect x="203.6" y="272.4" width="5.4" height="2.6"/><rect x="211" y="272.4" width="5.4" height="2.6"/></g>
<text class="c" x="202.9" y="293.4" font-size="12.7" fill="#5a5550">打</text><text class="c" x="202.9" y="305" font-size="12.7" fill="#5a5550">断</text>
<path d="M211.6 306.8 L211.6 312.6 L208 309.7 Z" fill="#6a6a6a"/>
<g fill="none" stroke="#ababab" stroke-width="1"><path d="M202.6 325.6 L208.6 325.6 M206.2 323.2 L208.6 325.6 L206.2 328"/><path d="M217.8 325.6 L211.8 325.6 M214.2 323.2 L211.8 325.6 L214.2 328"/><rect x="203.6" y="330.2" width="5.4" height="2.6"/><rect x="211" y="330.2" width="5.4" height="2.6"/></g>
<text class="c" x="202.9" y="350.4" font-size="12.7" fill="#5a5550">合</text><text class="c" x="202.9" y="362.6" font-size="12.7" fill="#5a5550">并</text>
<g fill="none" stroke="#ababab" stroke-width="1"><path d="M203.4 376.6 L217 376.6 M203.4 384.6 L217 384.6 M204.4 375 L204.4 386 M216 375 L216 386"/><path d="M208 380.6 L215.4 372.4 L217.2 374 L210.4 381.6 L207.4 382.4 Z" fill="#e6e6e6"/></g>
<text class="c" x="202.9" y="400.2" font-size="12.7" fill="#5a5550">分</text><text class="c" x="202.9" y="412.2" font-size="12.7" fill="#5a5550">割</text>
<rect x="201" y="419" width="19" height="1.2" fill="#8f8f8f"/>
<g fill="none" stroke="#ababab" stroke-width="1"><rect x="203.6" y="428" width="1.8" height="13.6" fill="#c8c8c8"/><path d="M206 435.4 L214.6 435.4 L214.6 440.4 L206 440.4"/><path d="M215 431 L208.4 431 M210.6 428.8 L208.4 431 L210.6 433.2"/></g>
<text class="c" x="202.9" y="457" font-size="12.7" fill="#5a5550">对</text><text class="c" x="202.9" y="469" font-size="12.7" fill="#5a5550">齐</text>
<path d="M211.6 470.4 L211.6 476.2 L208 473.3 Z" fill="#6a6a6a"/>
<g fill="none" stroke="#ababab" stroke-width="1.1"><path d="M206.4 498 Q202.6 497.6 203.2 493.6 Q203.6 491 206.4 490.6 Q207 486.6 210.4 486.6 Q213.8 486.6 214.4 490.6 Q217.4 491 217.6 494 Q217.8 497.8 214.2 498 Z"/><path d="M207.6 495.6 Q205.6 495.4 206 493.4 Q206.4 492.4 208 492.4 Q208.4 490 210.4 490 Q212.4 490 212.8 492.4 Q214.6 492.4 214.8 493.8 Q215 495.6 213 495.6 Z"/></g>
<text class="c" x="202.9" y="514.8" font-size="12.7" fill="#5a5550">偏</text><text class="c" x="202.9" y="526.6" font-size="12.7" fill="#5a5550">移</text>
<path d="M212.4 545.4 L215.4 548.6 L218.4 545.4 M212.4 549.6 L215.4 552.8 L218.4 549.6" stroke="#000" stroke-width="1.6" fill="none"/>
<rect x="199" y="1.2" width="1.6" height="1.6" fill="#a8a8a8"/><rect x="199.9" y="2.0" width="1" height="1" fill="#fff"/><rect x="724" y="1.2" width="1.6" height="1.6" fill="#a8a8a8"/><rect x="724.9" y="2.0" width="1" height="1" fill="#fff"/><rect x="199" y="4.8" width="1.6" height="1.6" fill="#a8a8a8"/><rect x="199.9" y="5.6" width="1" height="1" fill="#fff"/><rect x="724" y="4.8" width="1.6" height="1.6" fill="#a8a8a8"/><rect x="724.9" y="5.6" width="1" height="1" fill="#fff"/><rect x="199" y="8.4" width="1.6" height="1.6" fill="#a8a8a8"/><rect x="199.9" y="9.2" width="1" height="1" fill="#fff"/><rect x="724" y="8.4" width="1.6" height="1.6" fill="#a8a8a8"/><rect x="724.9" y="9.2" width="1" height="1" fill="#fff"/><rect x="199" y="12.0" width="1.6" height="1.6" fill="#a8a8a8"/><rect x="199.9" y="12.8" width="1" height="1" fill="#fff"/><rect x="724" y="12.0" width="1.6" height="1.6" fill="#a8a8a8"/><rect x="724.9" y="12.8" width="1" height="1" fill="#fff"/>
<path d="M214.2 -2 L214.2 8 L216.6 5.8 L218.2 9.4 L219.4 8.8 L217.8 5.4 L220.8 5.2 Z" fill="#fff" stroke="#5070a8" stroke-width="0.9"/>
<text class="c" x="229.2" y="8.8" font-size="12" fill="#10102a" stroke="#10102a" stroke-width="0.26" textLength="23.8" lengthAdjust="spacing">选择</text>
<path d="M256.2 1.9 L262.8 1.9 L259.5 5.7 Z" fill="#111"/>
<rect x="265.4" y="0" width="1" height="12.6" fill="#8a8a8a"/>
<rect x="275.6" y="-4" width="9" height="11.4" fill="#f4f6ff" stroke="#4a5cb0" stroke-width="1"/><path d="M276 -2.4 L284.2 7 M284.2 -2.4 L276 7" stroke="#b4b4e4" stroke-width="0.9"/><rect x="279" y="2" width="2.2" height="2.2" fill="#e03030"/>
<text class="c" x="292" y="8.8" font-size="12" fill="#111" stroke="#111" stroke-width="0.26">点</text>
<rect x="310.4" y="0" width="1" height="12.6" fill="#8a8a8a"/>
<rect x="318.2" y="-3" width="13.2" height="12" fill="#e4ebf8" stroke="#66708c" stroke-width="1" stroke-dasharray="1.4 1.2"/><path d="M319.6 2.2 L323.2 2.2 M321.4 0.4 L321.4 4 M326.6 2.2 L330.2 2.2 M328.4 0.4 L328.4 4 M323 6.2 L326.6 6.2 M324.8 4.4 L324.8 8" stroke="#2a3048" stroke-width="1" fill="none"/>
<text class="c" x="337.4" y="8.8" font-size="12" fill="#111" stroke="#111" stroke-width="0.26" textLength="48.6" lengthAdjust="spacing">智能布置</text>
<path d="M388 2 L393 2 L390.5 4.8 Z" fill="#111"/>
<rect x="402" y="-2" width="10" height="12" fill="#f4f6fc" stroke="#5a78c8" stroke-width="1"/><path d="M404 3 L407 0 L409 2 L413.4 -2.4" stroke="#c8a040" stroke-width="1.2" fill="none"/><rect x="411" y="-3" width="3" height="3" fill="#5aa070"/>
<text class="c" x="420" y="8.8" font-size="12" fill="#111" stroke="#111" stroke-width="0.26" textLength="48.3" lengthAdjust="spacing">精确布置</text>
<rect x="477" y="6.6" width="13.6" height="1" fill="#555"/><rect x="480.4" y="4" width="8" height="2.4" fill="#b8d0f8" stroke="#4468c0" stroke-width="0.8"/><path d="M483 3.4 L489 -3 L490.6 -1.6 L484.6 4.4 Z" fill="#f0e0a0" stroke="#806030" stroke-width="0.7"/>
<text class="c" x="495.6" y="8.8" font-size="12" fill="#111" stroke="#111" stroke-width="0.26" textLength="95.6" lengthAdjust="spacing">设置门窗立樘位置</text>
<rect x="733.6" y="-4" width="15" height="14.4" fill="#e0e0e0" stroke="#b0b0b0" stroke-width="1"/><circle cx="743" cy="1.2" r="3.6" fill="#f4f4f4" stroke="#9a9a9a" stroke-width="1.2"/><path d="M740.4 4 L736.8 7.8" stroke="#9a9a9a" stroke-width="1.6"/>
<text class="c" x="753.6" y="8.8" font-size="12.4" fill="#8a8a8a" textLength="37" lengthAdjust="spacing">从模型</text>
<rect x="199" y="562.4" width="1.6" height="1.6" fill="#a8a8a8"/><rect x="199.9" y="563.2" width="1" height="1" fill="#fff"/><rect x="611.2" y="559.4" width="1.6" height="1.6" fill="#a8a8a8"/><rect x="612.1" y="560.2" width="1" height="1" fill="#fff"/><rect x="199" y="566.1" width="1.6" height="1.6" fill="#a8a8a8"/><rect x="199.9" y="566.9" width="1" height="1" fill="#fff"/><rect x="611.2" y="563.1" width="1.6" height="1.6" fill="#a8a8a8"/><rect x="612.1" y="563.9" width="1" height="1" fill="#fff"/><rect x="199" y="569.8" width="1.6" height="1.6" fill="#a8a8a8"/><rect x="199.9" y="570.6" width="1" height="1" fill="#fff"/><rect x="611.2" y="566.8" width="1.6" height="1.6" fill="#a8a8a8"/><rect x="612.1" y="567.6" width="1" height="1" fill="#fff"/><rect x="199" y="573.5" width="1.6" height="1.6" fill="#a8a8a8"/><rect x="199.9" y="574.3" width="1" height="1" fill="#fff"/><rect x="611.2" y="570.5" width="1.6" height="1.6" fill="#a8a8a8"/><rect x="612.1" y="571.3" width="1" height="1" fill="#fff"/><rect x="199" y="577.2" width="1.6" height="1.6" fill="#a8a8a8"/><rect x="199.9" y="578.0" width="1" height="1" fill="#fff"/><rect x="611.2" y="574.2" width="1.6" height="1.6" fill="#a8a8a8"/><rect x="612.1" y="575.0" width="1" height="1" fill="#fff"/><rect x="199" y="580.9" width="1.6" height="1.6" fill="#a8a8a8"/><rect x="199.9" y="581.7" width="1" height="1" fill="#fff"/><rect x="611.2" y="577.9" width="1.6" height="1.6" fill="#a8a8a8"/><rect x="612.1" y="578.7" width="1" height="1" fill="#fff"/>
<text class="c" x="209.2" y="577.2" font-size="12.6" fill="#6e6e6e" textLength="36.8" lengthAdjust="spacing">不偏移</text>
<path d="M253 570.4 L259.4 570.4 L256.2 574 Z" fill="#8c8c8c"/>
<path d="M336.2 569.8 L341.8 569.8 L339 566.6 Z" fill="#9a9a9a"/><path d="M336.2 575.6 L341.8 575.6 L339 578.8 Z" fill="#9a9a9a"/>
<path d="M440.4 569.8 L446.0 569.8 L443.2 566.6 Z" fill="#9a9a9a"/><path d="M440.4 575.6 L446.0 575.6 L443.2 578.8 Z" fill="#9a9a9a"/>
<text class="c" x="502.4" y="577.6" font-size="12.8" fill="#000" stroke="#000" stroke-width="0.23" textLength="24.8" lengthAdjust="spacing">旋转</text>
<path d="M587.4000000000001 569.8 L593.0 569.8 L590.2 566.6 Z" fill="#9a9a9a"/><path d="M587.4000000000001 575.6 L593.0 575.6 L590.2 578.8 Z" fill="#9a9a9a"/>
<circle cx="603.6" cy="570" r="1.45" fill="none" stroke="#555" stroke-width="0.9"/>
<path d="M621.6 568 L636.6 568 M625.2 565 L625.2 580.6" stroke="#eea2aa" stroke-width="3.4" fill="none"/><path d="M629.4 571.6 L629.8 576.6 L631.4 575.8 L634.6 579.6 L635.8 578.8 L632.8 575 L634.4 574.2 Z" fill="#f4f4f8" stroke="#5a6078" stroke-width="0.8"/>
<text class="c" x="641" y="578.2" font-size="12.8" fill="#000" stroke="#000" stroke-width="0.23" textLength="24.8" lengthAdjust="spacing">正交</text>
<path d="M672.4 565.6 L685.6 578.6 M685.6 565.6 L672.4 578.6" stroke="#5f8fe4" stroke-width="1.1" fill="none"/><rect x="677.2" y="570.2" width="4" height="4" fill="#3558b8"/>
<text class="c" x="691.2" y="578.2" font-size="12.8" fill="#000" stroke="#000" stroke-width="0.23" textLength="24.8" lengthAdjust="spacing">交点</text>
<path d="M735.9 565.4 L735.9 579.6" stroke="#6a98e6" stroke-width="1.7" fill="none"/><path d="M723 576.4 L738.8 576.4" stroke="#2c5cc8" stroke-width="1.3" fill="none"/><rect x="734.2" y="574.8" width="3.3" height="3.3" fill="#1c3ca8"/>
<text class="c" x="743.2" y="578.2" font-size="12.8" fill="#000" stroke="#000" stroke-width="0.23" textLength="24.8" lengthAdjust="spacing">垂点</text>
<path d="M774.4 573 L781 573" stroke="#7aa2ea" stroke-width="1.3"/><rect x="780.6" y="571.2" width="3.7" height="3.7" fill="#1c2ca4"/></svg>
</div>
</body></html>
